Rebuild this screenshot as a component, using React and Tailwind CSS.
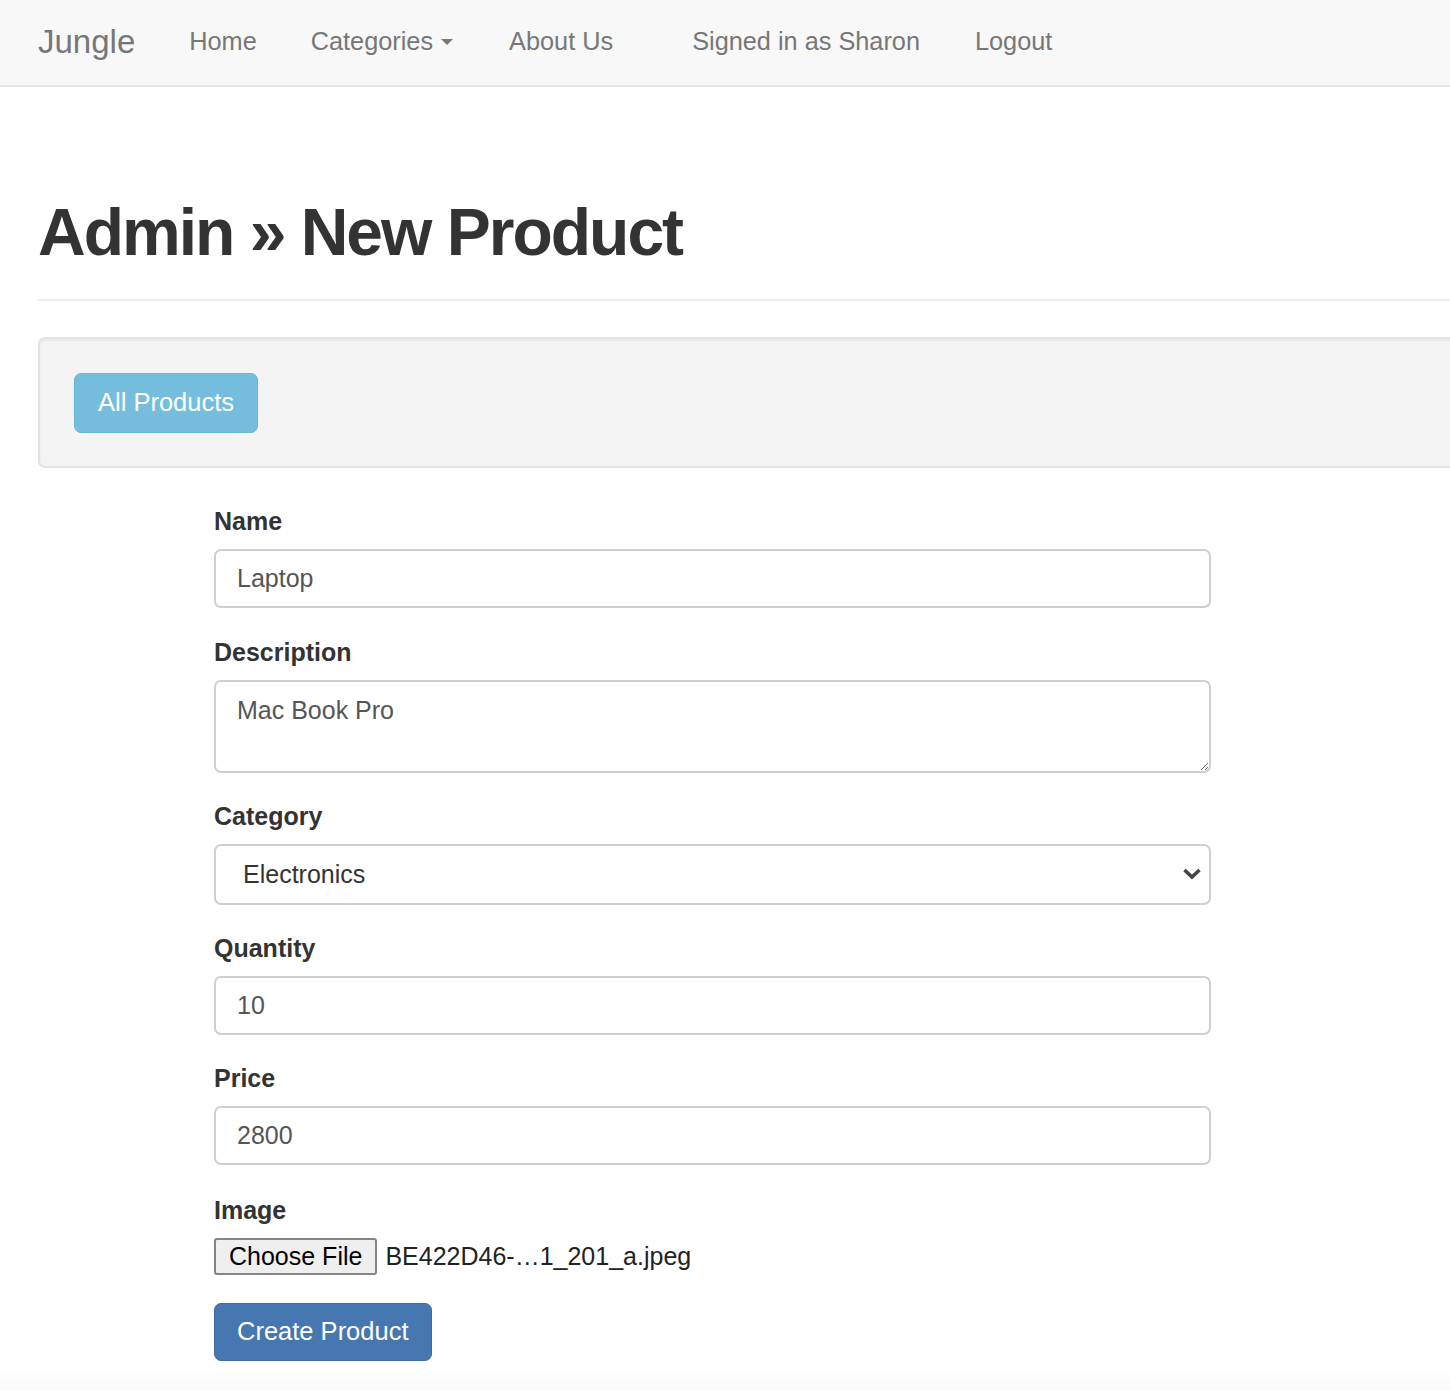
import React from 'react';

const font = "font-['Helvetica_Neue','Liberation_Sans',Arial,sans-serif]";

function NavBar() {
    return (
        <nav className="h-[87px] bg-[#f8f8f8] border-b-2 border-[#e7e7e7] flex items-center text-[#777] pb-[2px]">
            <a className="ml-[38px] text-[33px] leading-none">Jungle</a>
            <a className="ml-[54px] text-[25.3px] leading-none">Home</a>
            <a className="ml-[54px] text-[25.3px] leading-none flex items-center">
                Categories
                <span className="ml-[8px] mt-[2px] w-0 h-0 border-l-[6px] border-r-[6px] border-t-[6px] border-l-transparent border-r-transparent border-t-[#777]" />
            </a>
            <a className="ml-[56px] text-[25.3px] leading-none">About Us</a>
            <a className="ml-[79px] text-[25.3px] leading-none">Signed in as Sharon</a>
            <a className="ml-[55px] text-[25.3px] leading-none">Logout</a>
        </nav>
    );
}

function Field({ label, className = '', children }) {
    return (
        <div className={`flex flex-col ${className}`}>
            <label className="text-[25px] leading-[37px] font-bold text-[#333] mb-[9px]">{label}</label>
            {children}
        </div>
    );
}

const inputCls = "w-full h-[59px] border-2 border-[#cfcfcf] rounded-[7px] bg-white px-[21px] text-[25px] text-[#555] outline-none";

export default function App() {
    return (
        <div className={`${font} bg-white min-h-[1390px] overflow-hidden`}>
            <NavBar />

            <div className="ml-[38px] w-[1440px]">
                {/* Page header */}
                <div className="pt-[110px] pb-[32px] border-b-2 border-[#eee]">
                    <h1 className="text-[66px] leading-[70px] font-bold tracking-[-2px] text-[#333]">
                        Admin » New Product
                    </h1>
                </div>

                {/* Well */}
                <div className="mt-[36px] h-[131px] bg-[#f4f4f4] border-2 border-[#e3e3e3] rounded-[7px] shadow-[inset_0_2px_2px_rgba(0,0,0,0.05)] flex items-center pl-[34px]">
                    <button className="h-[60px] px-[23px] bg-[#75bddc] border border-[#6bb6d6] rounded-[7px] text-white text-[25.5px] leading-none">
                        All Products
                    </button>
                </div>

                {/* Form */}
                <form className="ml-[176px] w-[997px] mt-[35px] flex flex-col gap-[25px]">
                    <Field label="Name">
                        <input className={inputCls} defaultValue="Laptop" />
                    </Field>
                    <Field label="Description" className="mt-[1px]">
                        <textarea className="w-full h-[93px] border-2 border-[#cfcfcf] rounded-[7px] bg-white px-[21px] pt-[10px] text-[25px] leading-[36px] text-[#555] outline-none" defaultValue="Mac Book Pro" />
                    </Field>
                    <Field label="Category">
                        <div className="relative">
                            <select className="w-full h-[61px] appearance-none border-2 border-[#cfcfcf] rounded-[7px] bg-white px-[27px] text-[25px] text-[#333] outline-none" defaultValue="Electronics">
                                <option>Electronics</option>
                            </select>
                            <svg className="absolute right-[9px] top-[23px] pointer-events-none" width="20" height="14" viewBox="0 0 20 14">
                                <path d="M2.5 3 L10 10 L17.5 3" fill="none" stroke="#444" strokeWidth="3.6" />
                            </svg>
                        </div>
                    </Field>
                    <Field label="Quantity">
                        <input className={inputCls} defaultValue="10" />
                    </Field>
                    <Field label="Price">
                        <input className={inputCls} defaultValue="2800" />
                    </Field>
                    <Field label="Image" className="mt-[2px]">
                        <div className="flex items-center h-[36px]">
                            <span className="h-[37px] px-[13px] flex items-center bg-[#efefef] border-2 border-[#858585] rounded-[3px] text-[25px] text-black leading-none">
                                Choose File
                            </span>
                            <span className="ml-[8px] text-[25px] text-[#222] leading-none">BE422D46-…1_201_a.jpeg</span>
                        </div>
                    </Field>
                    <div className="mt-[4px]">
                        <button type="button" className="h-[58px] px-[22px] bg-[#4677b1] border border-[#3f6ca3] rounded-[7px] text-white text-[25.5px] leading-none">
                            Create Product
                        </button>
                    </div>
                </form>
            </div>

            <div className="mt-[8px] h-[30px] bg-gradient-to-b from-white to-[#f7f7f7]" />
        </div>
    );
}
